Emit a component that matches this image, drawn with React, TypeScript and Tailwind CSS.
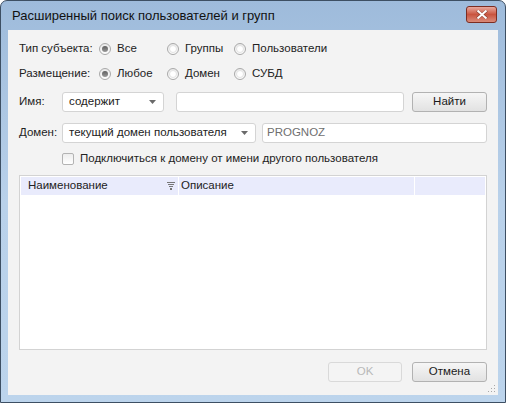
import React from 'react';

const FONT = { fontFamily: '"Liberation Sans", Arial, sans-serif' };

function Radio({ checked }: { checked?: boolean }) {
  return (
    <span className="flex h-[12px] w-[12px] shrink-0 items-center justify-center rounded-full border border-[#a9a9a9] bg-gradient-to-b from-[#e9e9e9] to-[#fdfdfd]">
      {checked ? (
        <span className="h-[6px] w-[6px] rounded-full bg-gradient-to-b from-[#5f5f5f] to-[#9a9a9a]" />
      ) : (
        <span className="h-[8px] w-[8px] rounded-full border border-[#e3e3e3] bg-white" />
      )}
    </span>
  );
}

function Option({ label, checked, width }: { label: string; checked?: boolean; width: string }) {
  return (
    <div className={`flex shrink-0 items-center gap-[6px] whitespace-nowrap ${width}`}>
      <Radio checked={checked} />
      <span>{label}</span>
    </div>
  );
}

function Arrow() {
  return (
    <svg width="7" height="4" viewBox="0 0 7 4" className="shrink-0">
      <path d="M0 0h7L3.5 4z" fill="#6a6a6a" />
    </svg>
  );
}

function Combo({ text, width }: { text: string; width: string }) {
  return (
    <div className={`flex h-[20px] shrink-0 items-center justify-between whitespace-nowrap rounded-[3px] border border-[#d4d4d4] bg-white pl-[6px] pr-[7px] ${width}`}>
      <span>{text}</span>
      <Arrow />
    </div>
  );
}

function Btn({ label, disabled }: { label: string; disabled?: boolean }) {
  return (
    <div
      className={`flex h-[20px] items-center justify-center rounded-[3px] border ${
        disabled
          ? 'border-[#d9d9d9] bg-[#f4f4f4] text-[#b8b8b8]'
          : 'border-[#b2b2b2] bg-gradient-to-b from-[#f6f6f6] to-[#e2e2e2] text-[#1a1a1a]'
      }`}
    >
      {label}
    </div>
  );
}

function FilterIcon() {
  return (
    <svg width="8" height="8" viewBox="0 0 8 8" className="shrink-0">
      <rect x="0" y="0" width="8" height="1" fill="#777" />
      <rect x="1" y="2" width="6" height="1" fill="#777" />
      <rect x="2" y="4" width="4" height="1" fill="#777" />
      <rect x="3" y="6" width="2" height="2" fill="#777" />
    </svg>
  );
}

export default function App() {
  return (
    <div className="h-[403px] w-[506px] overflow-hidden bg-white" style={FONT}>
      <div className="flex h-[403px] w-[506px] flex-col rounded-t-[7px] border border-[#3d4f63] bg-gradient-to-b from-[#9ebbdb] via-[#b9d1ea] to-[#bcd4ec]">
        {/* Title bar */}
        <div className="flex h-[29px] shrink-0 items-center justify-between pl-[11px] pr-[8px]">
          <span className="pt-[1px] text-[13px] text-[#111]">Расширенный поиск пользователей и групп</span>
          <div className="mt-[-2px] flex h-[17px] w-[31px] items-center justify-center rounded-[3px] border border-[#7c2d22] bg-gradient-to-b from-[#e8a99e] via-[#c9543f] to-[#d98a7a]">
            <svg width="12" height="9" viewBox="0 0 12 9">
              <path d="M1 0.5L6 4.5L11 0.5M1 8.5L6 4.5L11 8.5" stroke="#5a2a22" strokeWidth="3" fill="none" opacity="0.5" />
              <path d="M1.5 0.5L6 4.5L10.5 0.5M1.5 8.5L6 4.5L10.5 8.5" stroke="#fff" strokeWidth="2" fill="none" />
            </svg>
          </div>
        </div>

        {/* Client */}
        <div className="flex flex-1 px-[7px] pb-[7px]">
          <div className="relative flex flex-1 flex-col bg-[#f3f3f3] px-[11px] text-[11.5px] text-[#222]">
            <div className="mt-[11px] flex h-[16px] items-center">
              <span className="w-[80px] shrink-0 whitespace-nowrap">Тип субъекта:</span>
              <Option label="Все" checked width="w-[68px]" />
              <Option label="Группы" width="w-[67px]" />
              <Option label="Пользователи" width="" />
            </div>
            <div className="mt-[9px] flex h-[16px] items-center">
              <span className="w-[80px] shrink-0 whitespace-nowrap">Размещение:</span>
              <Option label="Любое" checked width="w-[68px]" />
              <Option label="Домен" width="w-[67px]" />
              <Option label="СУБД" width="" />
            </div>

            <div className="mt-[10px] flex h-[20px] items-center">
              <span className="w-[43px] shrink-0">Имя:</span>
              <Combo text="содержит" width="w-[102px]" />
              <div className="ml-[12px] h-[20px] w-[228px] shrink-0 rounded-[3px] border border-[#d4d4d4] bg-white" />
              <div className="ml-[8px] w-[75px] shrink-0">
                <Btn label="Найти" />
              </div>
            </div>

            <div className="mt-[11px] flex h-[20px] items-center">
              <span className="w-[43px] shrink-0">Домен:</span>
              <Combo text="текущий домен пользователя" width="w-[194px]" />
              <div className="ml-[6px] flex h-[20px] w-[225px] shrink-0 items-center rounded-[3px] border border-[#d4d4d4] bg-white pl-[4px] text-[#6f6f6f]">
                PROGNOZ
              </div>
            </div>

            <div className="mt-[10px] flex h-[12px] items-center pl-[43px]">
              <span className="h-[12px] w-[12px] shrink-0 rounded-[2px] border border-[#b3b3b3] bg-gradient-to-b from-[#ededed] to-white" />
              <span className="ml-[6px] whitespace-nowrap">Подключиться к домену от имени другого пользователя</span>
            </div>

            <div className="mt-[10px] flex h-[175px] flex-col border border-[#d3d3d3] bg-white p-[1px]">
              <div className="flex h-[18px] bg-[#e9ebfc]">
                <div className="flex w-[157px] items-center justify-between pl-[7px] pr-[3px]">
                  <span>Наименование</span>
                  <FilterIcon />
                </div>
                <div className="w-[1px] bg-white" />
                <div className="flex w-[235px] items-center pl-[2px]">Описание</div>
                <div className="w-[1px] bg-white" />
                <div className="flex-1" />
              </div>
            </div>

            <div className="mt-[12px] flex justify-end gap-[10px]">
              <div className="w-[74px]">
                <Btn label="OK" disabled />
              </div>
              <div className="w-[75px]">
                <Btn label="Отмена" />
              </div>
            </div>

            <svg width="8" height="8" viewBox="0 0 8 8" className="absolute bottom-[2px] right-[2px]">
              <rect x="6" y="0" width="1" height="1" fill="#a8a8a8" />
              <rect x="3" y="3" width="1" height="1" fill="#a8a8a8" />
              <rect x="6" y="3" width="1" height="1" fill="#a8a8a8" />
              <rect x="0" y="6" width="1" height="1" fill="#a8a8a8" />
              <rect x="3" y="6" width="1" height="1" fill="#a8a8a8" />
              <rect x="6" y="6" width="1" height="1" fill="#a8a8a8" />
            </svg>
          </div>
        </div>
      </div>
    </div>
  );
}
